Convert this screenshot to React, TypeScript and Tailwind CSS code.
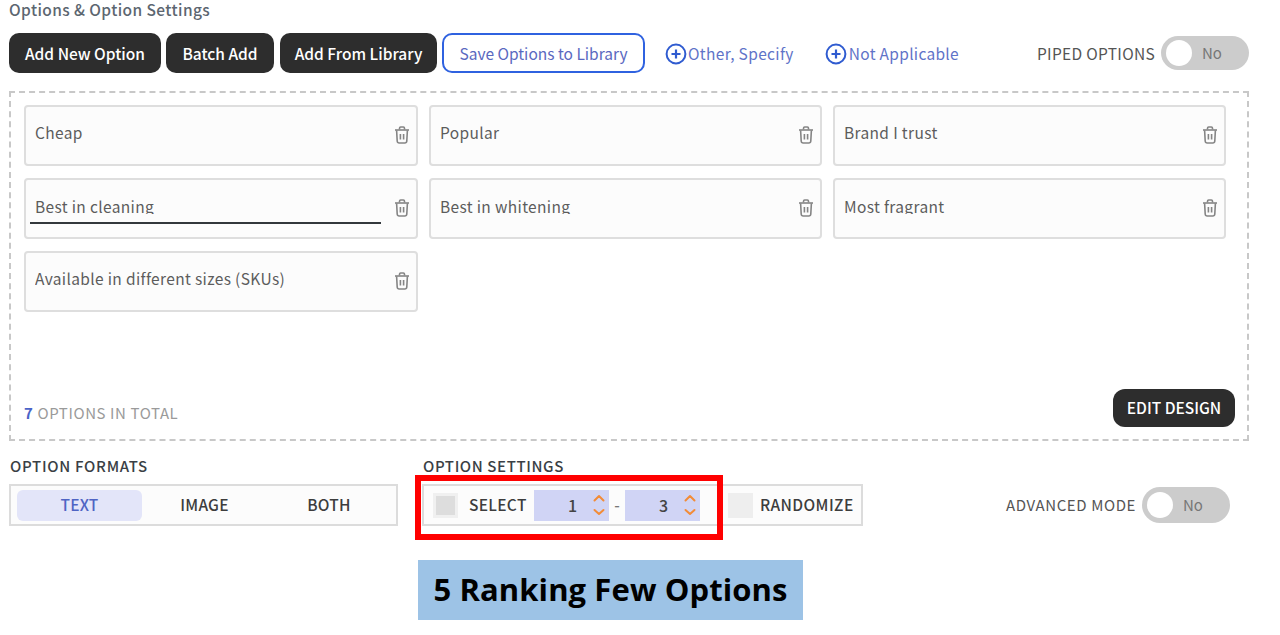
import React from "react";

const ui = "font-['Noto_Sans_CJK_KR','Noto_Sans',sans-serif]";

function Trash() {
  return (
    <svg width="16" height="18" viewBox="0 0 16 18" fill="none" stroke="#858585" strokeWidth="1.6" className="shrink-0">
      <path d="M1 4h14" />
      <path d="M5.5 3.6V2.2c0-.7.5-1.2 1.2-1.2h2.6c.7 0 1.2.5 1.2 1.2v1.4" />
      <path d="M2.6 4.2l.6 10.8c.1 1.2.9 2 2 2h5.6c1.1 0 1.9-.8 2-2l.6-10.8" />
      <path d="M6.4 8v5.4M9.6 8v5.4" />
    </svg>
  );
}

function PlusCircle() {
  return (
    <svg width="22" height="22" viewBox="0 0 22 22" fill="none" stroke="#2f5bd0" className="shrink-0">
      <circle cx="11" cy="11" r="9.4" strokeWidth="2" />
      <path d="M11 6.5v9M6.5 11h9" strokeWidth="2.2" />
    </svg>
  );
}

function Spinner() {
  return (
    <svg width="14" height="24" viewBox="0 0 14 24" fill="none" stroke="#f28c38" strokeWidth="2" strokeLinecap="round" strokeLinejoin="round">
      <path d="M2.5 7.5L7 3l4.5 4.5" />
      <path d="M2.5 17L7 21l4.5-4" />
    </svg>
  );
}

function Toggle({ w, h }: { w: string; h: string }) {
  return (
    <div className={`${w} ${h} shrink-0 rounded-full bg-[#cccccc] flex items-center pl-[5px]`}>
      <div className="w-[26px] h-[26px] rounded-full bg-white" />
      <span className="ml-[10px] text-[15px] text-[#777777]">No</span>
    </div>
  );
}

function Card({ text, row, focused }: { text: string; row: 1 | 2 | 3; focused?: boolean }) {
  const clip = row === 2;
  return (
    <div className="relative h-[61px] rounded-[4px] border-2 border-[#dedede] bg-[#fcfcfc] flex items-start pl-[9px] pr-[6px]">
      <div className={`flex-1 text-[15.5px] tracking-[0.35px] leading-[24px] text-[#5c5c5c] overflow-hidden ${clip ? "mt-[14px] h-[20px]" : "mt-[13px] h-[24px]"}`}>
        {text}
      </div>
      <div className="mt-[19px]">
        <Trash />
      </div>
      {focused && <div className="absolute left-[4px] top-[42px] w-[351px] h-[2px] bg-[#33383c]" />}
    </div>
  );
}

function DarkButton({ w, children }: { w: string; children: React.ReactNode }) {
  return (
    <button className={`${w} h-[40px] rounded-[10px] bg-[#2d2d2d] text-white text-[15.5px] font-medium flex items-center justify-center pt-[1px]`}>
      {children}
    </button>
  );
}

function NumberBox({ value }: { value: string }) {
  return (
    <div className="w-[75px] h-[31px] bg-[#d0d4f5] flex items-center justify-end pr-[3px] text-[16px] text-[#444444]">
      <span className="mr-[15px]">{value}</span>
      <Spinner />
    </div>
  );
}

export default function App() {
  return (
    <div className={`${ui} w-[1280px] h-[635px] bg-white overflow-hidden pl-[9px]`}>
      <div className="h-[33px] text-[15.5px] tracking-[0.4px] leading-[18px] font-medium text-[#5c6670]">Options &amp; Option Settings</div>

      <div className="flex items-center w-[1240px] h-[40px]">
        <DarkButton w="w-[152px]">Add New Option</DarkButton>
        <div className="w-[5px]" />
        <DarkButton w="w-[108px]">Batch Add</DarkButton>
        <div className="w-[6px]" />
        <DarkButton w="w-[157px]">Add From Library</DarkButton>
        <div className="w-[5px]" />
        <button className="w-[203px] h-[40px] rounded-[10px] border-2 border-[#2f62e0] bg-white text-[15.5px] text-[#5a68c0] pt-[1px]">
          Save Options to Library
        </button>
        <div className="ml-[20px] flex items-center text-[15.5px] tracking-[0.35px] text-[#5f73c8] pt-[1px]">
          <PlusCircle />
          <span className="ml-[1px]">Other, Specify</span>
        </div>
        <div className="ml-[31px] flex items-center text-[15.5px] tracking-[0.3px] text-[#5f73c8] pt-[1px]">
          <PlusCircle />
          <span className="ml-[2px]">Not Applicable</span>
        </div>
        <div className="ml-auto flex items-center">
          <span className="text-[15.5px] tracking-[0.3px] text-[#555555] mr-[6px] pt-[1px]">PIPED OPTIONS</span>
          <Toggle w="w-[88px]" h="h-[34px]" />
        </div>
      </div>

      <div className="mt-[18px] w-[1240px] h-[350px] border-2 border-dashed border-[#c8c8c8] pl-[13px] pr-[21px] pt-[12px] pb-[12px] flex flex-col">
        <div className="grid grid-cols-[394px_393px_393px] gap-x-[11px] gap-y-[12px]">
          <Card text="Cheap" row={1} />
          <Card text="Popular" row={1} />
          <Card text="Brand I trust" row={1} />
          <Card text="Best in cleaning" row={2} focused />
          <Card text="Best in whitening" row={2} />
          <Card text="Most fragrant" row={2} />
          <Card text="Available in different sizes (SKUs)" row={3} />
        </div>
        <div className="flex-1 flex items-end justify-between">
          <div className="mb-[2px] text-[15px] tracking-[0.6px] leading-[24px] text-[#9a9a9a]">
            <span className="font-bold text-[#4a63c8]">7</span> OPTIONS IN TOTAL
          </div>
          <button className="-mr-[9px] w-[122px] h-[38px] rounded-[12px] bg-[#2d2d2d] text-white text-[15.5px] font-medium">
            EDIT DESIGN
          </button>
        </div>
      </div>

      <div className="mt-[14px] flex items-start w-[1221px]">
        <div className="w-[389px]">
          <div className="h-[29px] pl-[1px] text-[15px] tracking-[0.7px] leading-[22px] font-medium text-[#3a3f45]">OPTION FORMATS</div>
          <div className="h-[42px] border-2 border-[#dcdcdc] bg-[#fcfcfc] flex items-center pl-[6px] text-[15.5px] tracking-[0.2px] font-medium">
            <div className="w-[125px] h-[31px] rounded-[6px] bg-[#e3e5f9] text-[#4f64c4] flex items-center justify-center">TEXT</div>
            <div className="w-[125px] text-center text-[#3d3d3d]">IMAGE</div>
            <div className="w-[124px] text-center text-[#3d3d3d]">BOTH</div>
          </div>
        </div>
        <div className="ml-[24px]">
          <div className="h-[29px] pl-[1px] text-[15px] tracking-[0.6px] leading-[22px] font-medium text-[#3a3f45]">OPTION SETTINGS</div>
          <div className="relative w-[441px] h-[42px] border-2 border-[#dcdcdc] bg-[#fcfcfc] flex items-center text-[15.5px] font-medium text-[#3d3d3d]">
            <div className="ml-[9px] w-[25px] h-[25px] bg-[#f0f0f0] flex items-center justify-center">
              <div className="w-[19px] h-[19px] bg-[#dddddd]" />
            </div>
            <span className="ml-[11px] w-[65px] tracking-[0.3px]">SELECT</span>
            <NumberBox value="1" />
            <span className="w-[16px] text-center text-[#777777]">-</span>
            <NumberBox value="3" />
            <div className="ml-[28px] w-[25px] h-[25px] bg-[#eeeeee]" />
            <span className="ml-[7px] tracking-[0.4px]">RANDOMIZE</span>
            <div className="absolute -left-[9px] -top-[11px] w-[308px] h-[65px] border-[6px] border-[#ff0000]" />
          </div>
        </div>
        <div className="ml-auto mt-[32px] flex items-center">
          <span className="text-[15px] tracking-[0.6px] text-[#555555] mr-[6px]">ADVANCED MODE</span>
          <Toggle w="w-[88px]" h="h-[36px]" />
        </div>
      </div>

      <div className="mt-[34px] ml-[409px] w-[385px] h-[60px] bg-[#9dc3e6] flex items-center justify-center pb-[1px] font-['Open_Sans',sans-serif] font-bold text-[31px] tracking-[0.1px] text-black">
        5 Ranking Few Options
      </div>
    </div>
  );
}
